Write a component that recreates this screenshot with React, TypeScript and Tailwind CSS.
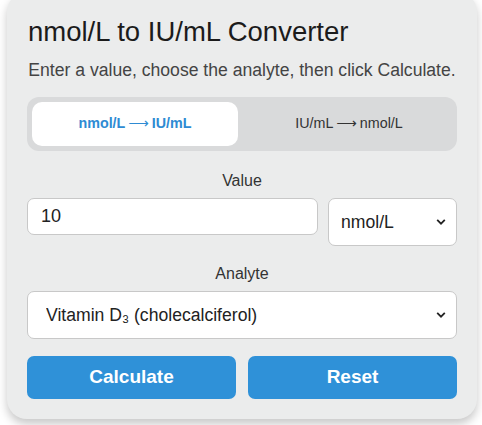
import React from "react";

function Chevron() {
  return (
    <svg width="10" height="7" viewBox="0 0 10 7" className="pointer-events-none absolute right-[11px] top-1/2 -translate-y-1/2">
      <path d="M1.2 1.4 L5 5.2 L8.8 1.4" fill="none" stroke="#222" strokeWidth="1.8" />
    </svg>
  );
}

function Arrow() {
  return <span className="mx-[3px] font-normal" style={{ fontFamily: '"DejaVu Sans", sans-serif' }}>⟶</span>;
}

export default function App() {
  return (
    <div className="min-h-[425px] overflow-hidden bg-white" style={{ fontFamily: '"Liberation Sans", Arial, sans-serif' }}>
      <div className="ml-[7px] mt-[-8px] w-[470px] rounded-[20px] bg-[#ebecec] px-5 pb-5 pt-[25px] shadow-[0_5px_10px_rgba(0,0,0,0.22)]">
        <h1 className="ml-px text-[27.5px] leading-[30px] text-[#1b1b1b]">nmol/L to IU/mL Converter</h1>
        <p className="mt-[13px] text-center text-[17.6px] leading-[20px] text-[#444]">
          Enter a value, choose the analyte, then click Calculate.
        </p>
        <div className="mt-[17px] grid grid-cols-2 gap-2 rounded-[12px] bg-[#d9dadb] p-[5px]">
          <button className="h-[44px] rounded-[10px] bg-white text-[14.3px] font-bold text-[#2e8bd3]">
            nmol/L<Arrow />IU/mL
          </button>
          <button className="h-[44px] rounded-[10px] text-[14.3px] text-[#333]">
            IU/mL<Arrow />nmol/L
          </button>
        </div>
        <div className="mt-[20px] text-center text-[16px] leading-[20px] text-[#333]">Value</div>
        <div className="mt-[7px] flex items-start gap-[10px]">
          <input
            defaultValue="10"
            className="h-[37px] flex-1 rounded-[7px] border border-[#c8c8c8] bg-white px-[13px] text-[18px] text-[#222] outline-none"
          />
          <div className="relative w-[129px]">
            <select className="h-[48px] w-full appearance-none rounded-[7px] border border-[#c8c8c8] bg-white pl-[12px] text-[17.6px] text-[#222] outline-none">
              <option>nmol/L</option>
            </select>
            <Chevron />
          </div>
        </div>
        <div className="mt-[18px] text-center text-[16px] leading-[20px] text-[#333]">Analyte</div>
        <div className="relative mt-[7px]">
          <select className="h-[48px] w-full appearance-none rounded-[7px] border border-[#c8c8c8] bg-white pl-[18px] text-[17.6px] text-[#222] outline-none">
            <option>Vitamin D₃ (cholecalciferol)</option>
          </select>
          <Chevron />
        </div>
        <div className="mt-[17px] grid grid-cols-2 gap-3">
          <button className="h-[43px] rounded-[7px] bg-[#2f91d8] text-[19px] font-bold text-white">Calculate</button>
          <button className="h-[43px] rounded-[7px] bg-[#2f91d8] text-[19px] font-bold text-white">Reset</button>
        </div>
      </div>
    </div>
  );
}
